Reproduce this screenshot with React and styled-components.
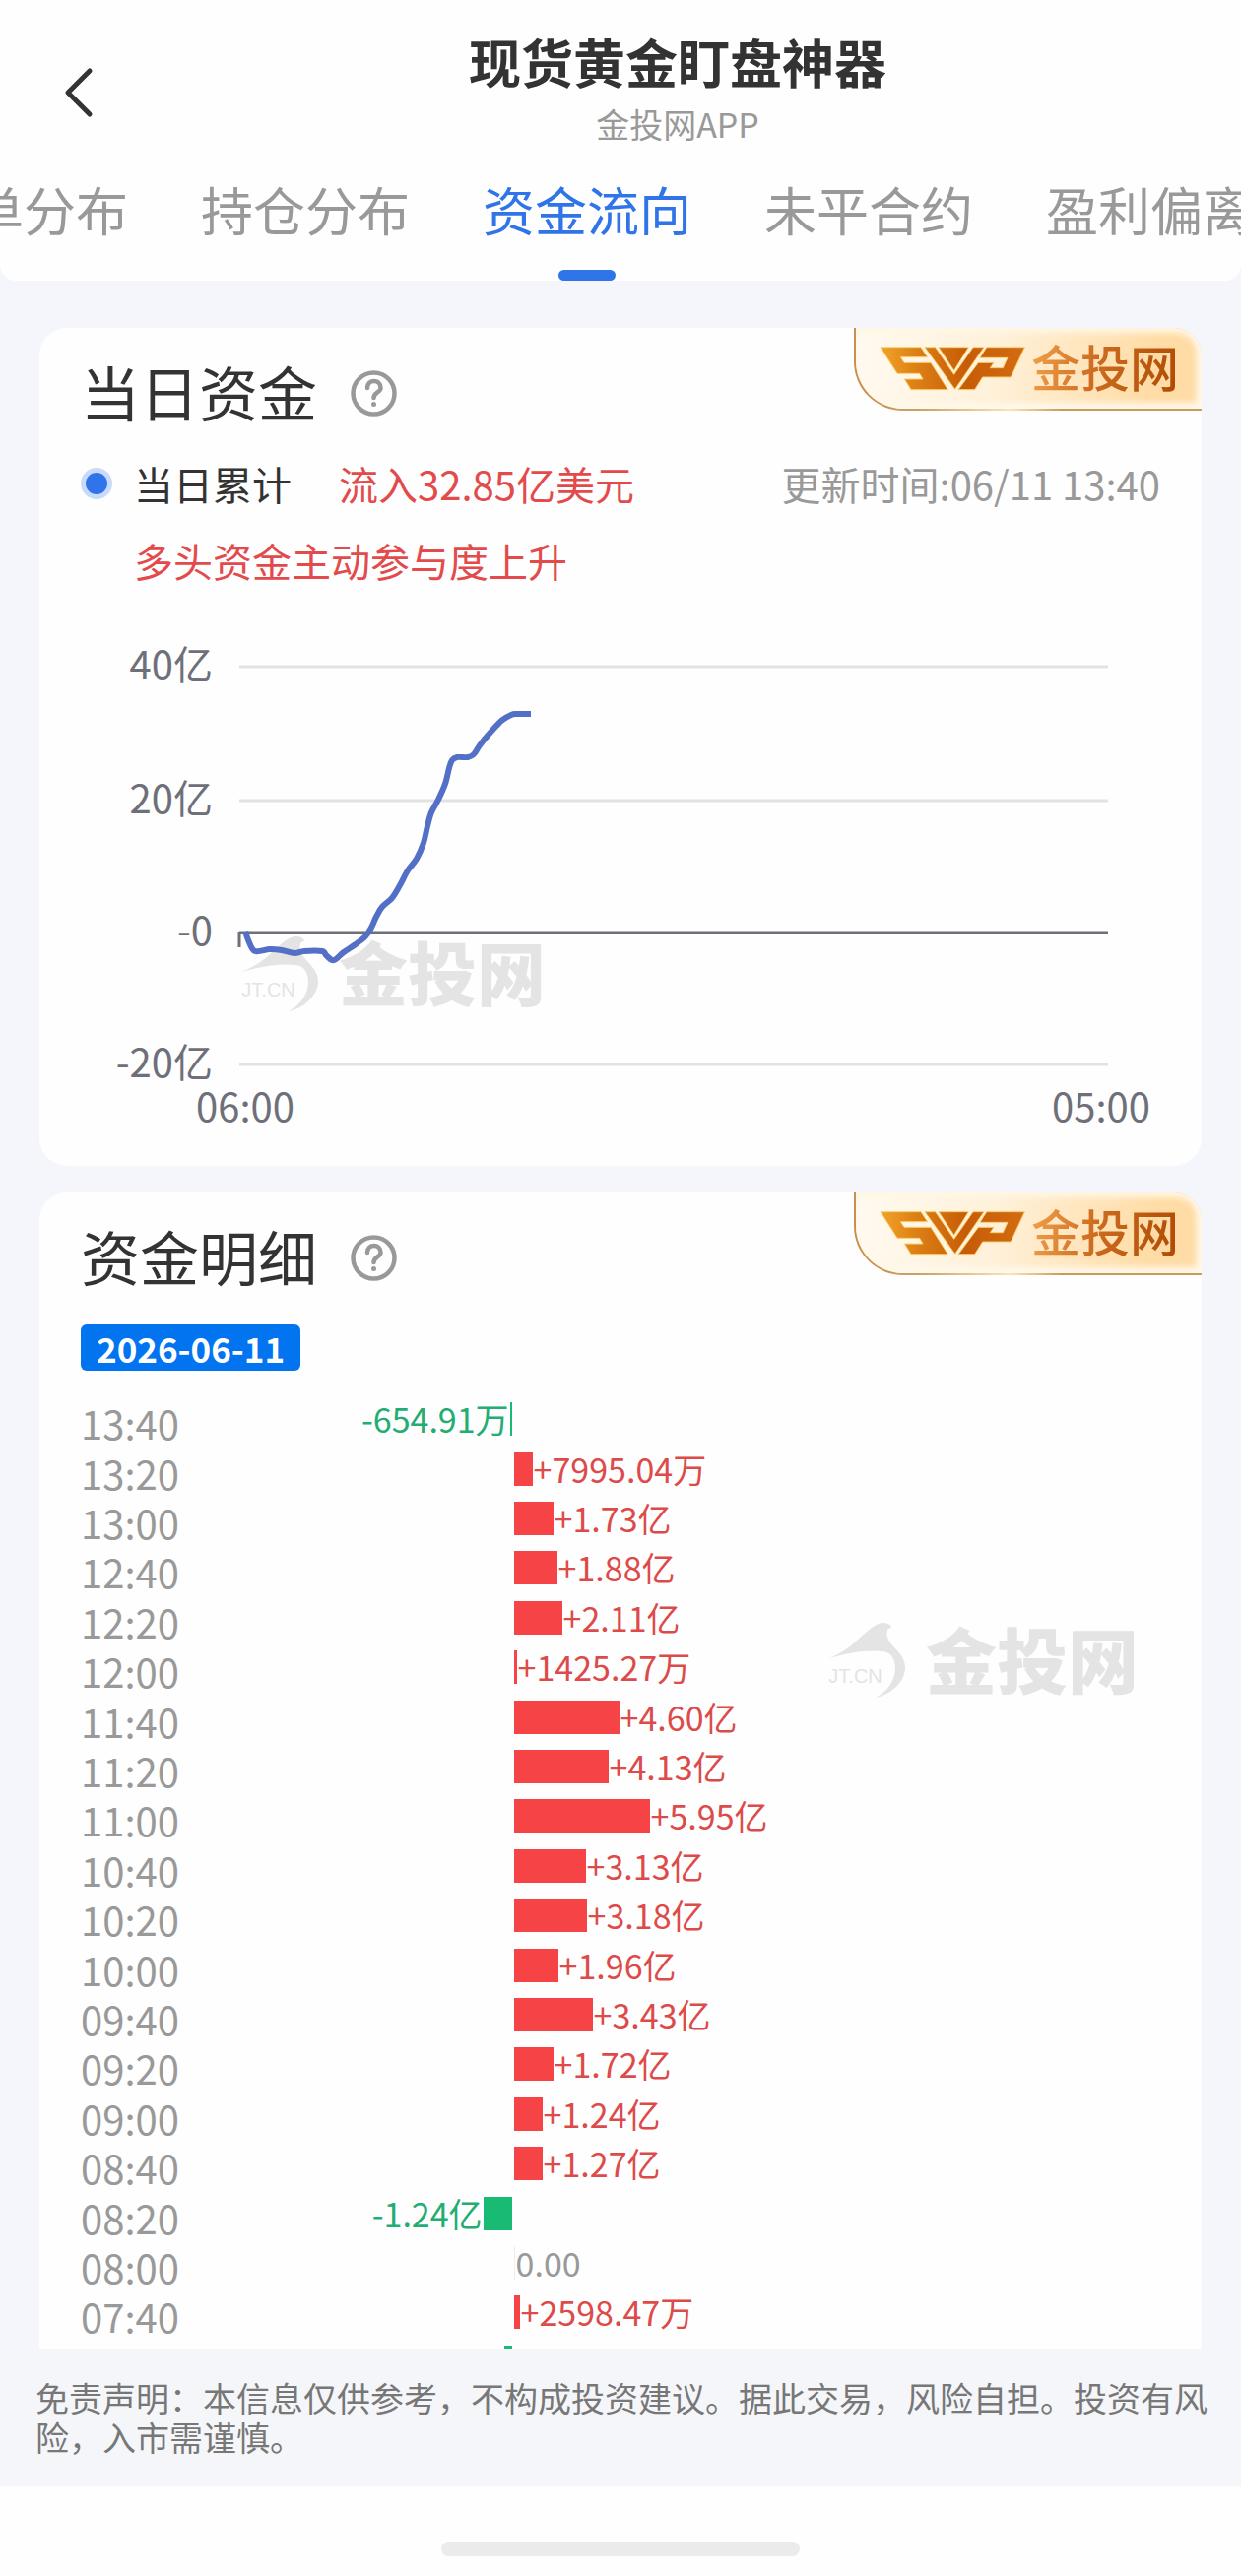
import React from "react";
import styled, { createGlobalStyle } from "styled-components";

const GlobalStyle = createGlobalStyle`
    * {
        box-sizing: border-box;
    }
    body {
        margin: 0;
        background: #fefefe;
        color: #333;
        font-family: "Noto Sans CJK SC", "Noto Sans", sans-serif;
    }
    button {
        padding: 0;
        border: 0;
        background: none;
        font: inherit;
        color: inherit;
        cursor: pointer;
    }
`;

const tabs = ["挂单分布", "持仓分布", "资金流向", "未平合约", "盈利偏离"];

// amounts in 亿
const flows = [
    { time: "13:40", amount: -0.065491, label: "-654.91万" },
    { time: "13:20", amount: 0.799504, label: "+7995.04万" },
    { time: "13:00", amount: 1.73, label: "+1.73亿" },
    { time: "12:40", amount: 1.88, label: "+1.88亿" },
    { time: "12:20", amount: 2.11, label: "+2.11亿" },
    { time: "12:00", amount: 0.142527, label: "+1425.27万" },
    { time: "11:40", amount: 4.6, label: "+4.60亿" },
    { time: "11:20", amount: 4.13, label: "+4.13亿" },
    { time: "11:00", amount: 5.95, label: "+5.95亿" },
    { time: "10:40", amount: 3.13, label: "+3.13亿" },
    { time: "10:20", amount: 3.18, label: "+3.18亿" },
    { time: "10:00", amount: 1.96, label: "+1.96亿" },
    { time: "09:40", amount: 3.43, label: "+3.43亿" },
    { time: "09:20", amount: 1.72, label: "+1.72亿" },
    { time: "09:00", amount: 1.24, label: "+1.24亿" },
    { time: "08:40", amount: 1.27, label: "+1.27亿" },
    { time: "08:20", amount: -1.24, label: "-1.24亿" },
    { time: "08:00", amount: 0, label: "0.00" },
    { time: "07:40", amount: 0.259847, label: "+2598.47万" },
    { time: "07:20", amount: -0.340218, label: "-3402.18万" },
];

const gridLines = [
    { y: 36, label: "40亿" },
    { y: 172, label: "20亿" },
    { y: 306, label: "-0", zero: true },
    { y: 440, label: "-20亿" },
];

const linePoints = [
    [167, 305], [171, 316], [177, 325], [192, 323], [204, 324], [217, 327],
    [227, 325], [245, 325], [249, 329], [255, 334], [259, 333], [267, 326],
    [279, 318], [289, 310], [295, 301], [300, 290], [306, 280], [316, 271],
    [324, 258], [332, 243], [341, 231], [348, 215], [352, 198], [356, 184],
    [363, 171], [370, 155], [374, 139], [377, 131], [382, 128], [393, 128],
    [399, 125], [405, 116], [413, 106], [427, 91], [437, 85], [443, 84], [457, 84],
];

const smoothPath = (points) =>
    points.slice(1).reduce((d, [x, y], i) => {
        const [x0, y0] = points[Math.max(i - 1, 0)];
        const [x1, y1] = points[i];
        const [x3, y3] = points[Math.min(i + 2, points.length - 1)];
        return `${d} C${x1 + (x - x0) / 6} ${y1 + (y - y0) / 6} ${x - (x3 - x1) / 6} ${y - (y3 - y1) / 6} ${x} ${y}`;
    }, `M${points[0].join(" ")}`);

const Page = styled.div`
    display: flex;
    flex-direction: column;
    height: 100vh;
    background: #f5f6fc;
`;

const Header = styled.header`
    flex: none;
    background: #fefefe;
    border-radius: 0 0 16px 16px;
`;

const TitleBar = styled.div`
    display: flex;
    align-items: flex-start;
    padding: 30px 0 36px;
`;

const BackButton = styled.button`
    display: flex;
    align-items: center;
    justify-content: flex-end;
    width: 116px;
    height: 128px;
    padding-right: 20px;
    margin-bottom: -12px;
`;

const TitleBlock = styled.div`
    flex: 1;
    text-align: center;
`;

const Title = styled.h1`
    margin: 0;
    font-size: 53px;
    line-height: 64px;
    font-weight: 700;
`;

const Subtitle = styled.div`
    margin-top: 12px;
    font-size: 34px;
    line-height: 40px;
    color: #999;
`;

const Tabs = styled.nav`
    display: flex;
    gap: 74px;
    overflow: hidden;
`;

const Tab = styled.button`
    flex: none;
    display: flex;
    flex-direction: column;
    align-items: center;
    justify-content: space-between;
    height: 103px;
    font-size: 53px;
    line-height: 60px;
    white-space: nowrap;
    color: ${({ $active }) => ($active ? "#2f74e8" : "#999")};

    &:first-child {
        margin-left: -82px;
    }
    &::after {
        content: "";
        width: 58px;
        height: 11px;
        border-radius: 6px;
        background: ${({ $active }) => ($active ? "#2f74e8" : "transparent")};
    }
`;

const Content = styled.main`
    flex: 1;
    min-height: 0;
    overflow-y: auto;
    scrollbar-width: none;
    padding: 48px 40px 0;
`;

const Card = styled.section`
    position: relative;
    margin-bottom: 27px;
    padding: 32px 42px 23px;
    border-radius: 28px;
    background: #fefefe;
`;

const CardHead = styled.div`
    display: flex;
    align-items: center;
    gap: 34px;
    height: 68px;
`;

const CardTitle = styled.h2`
    margin: 0;
    padding-bottom: 4px;
    font-size: 60px;
    line-height: 64px;
    font-weight: 400;
`;

const HelpButton = styled.button`
    display: flex;
`;

const Badge = styled.div`
    position: absolute;
    top: 0;
    right: 0;
    display: flex;
    align-items: center;
    gap: 2px;
    width: 353px;
    height: 84px;
    padding-left: 22px;
    border: solid transparent;
    border-width: 0 0 2px 2px;
    border-radius: 0 28px 0 50px;
    background:
        linear-gradient(100deg, #fffaf1 0%, #fff1da 40%, #ffdca5 85%) padding-box,
        linear-gradient(90deg, #c98f48 0%, #c9a568 20%, #f6e7b4 45%, #c79a55 60%, #c99a5c 100%) border-box;

    &::before {
        content: "";
        position: absolute;
        inset: 0;
        border-radius: 0 28px 0 48px;
        box-shadow: inset -5px -6px 6px #fff8ea, inset 0 5px 6px #fff6e4;
    }
`;

const BadgeText = styled.span`
    position: relative;
    padding-bottom: 6px;
    font-size: 50px;
    line-height: 56px;
    font-weight: 500;
    color: transparent;
    background: linear-gradient(100deg, #f0a24c 0%, #cc6a1e 45%, #ad4a04 100%);
    background-clip: text;
`;

const BadgeLogo = styled.svg`
    position: relative;
    flex: none;
`;

const Summary = styled.div`
    display: flex;
    align-items: center;
    margin-top: 28px;
    font-size: 40px;
    line-height: 60px;
`;

const Dot = styled.span`
    width: 32px;
    height: 32px;
    margin-right: 22px;
    border: 5px solid #c9dafa;
    border-radius: 50%;
    background: #2f74e8;
`;

const Inflow = styled.strong`
    margin-left: 48px;
    font-weight: 400;
    color: #e34a4c;
`;

const Updated = styled.time`
    margin-left: auto;
    color: #999;
`;

const Comment = styled.p`
    margin: 18px 0 0 54px;
    font-size: 40px;
    line-height: 60px;
    color: #e34a4c;
`;

const ChartBox = styled.div`
    position: relative;
    margin-top: 42px;
`;

const ChartSvg = styled.svg`
    position: relative;
    display: block;
    width: 100%;
    height: auto;
    font-size: 40px;
    fill: #6e7079;
`;

const WatermarkBox = styled.div`
    position: absolute;
    display: flex;
    align-items: center;
    gap: 20px;
    line-height: 72px;
    font-weight: 900;
    color: #e4e4e4;
    pointer-events: none;
`;

const ChartMark = styled(WatermarkBox)`
    top: 309px;
    left: 160px;
    font-size: 70px;
`;

const ListMark = styled(WatermarkBox)`
    top: 231px;
    right: 22px;
    font-size: 72px;
`;

const WatermarkText = styled.span`
    padding-bottom: 6px;
`;

const DateChip = styled.time`
    display: inline-block;
    margin-top: 34px;
    padding: 0 16px;
    border-radius: 6px;
    background: #0274ef;
    color: #fefefe;
    font-size: 35px;
    line-height: 47px;
    font-weight: 700;
`;

const FlowBox = styled.div`
    position: relative;
    margin-top: 24px;
`;

const FlowList = styled.ul`
    position: relative;
    display: grid;
    grid-template-rows: repeat(20, 1fr);
    height: 1008px;
    margin: 0;
    padding: 0;
    list-style: none;
`;

const FlowRow = styled.li`
    display: grid;
    grid-template-columns: minmax(0, 2fr) minmax(0, 3fr);
    gap: 2px;
`;

const FlowSide = styled.div`
    display: flex;
    align-items: center;
`;

const FlowTime = styled.time`
    margin-right: auto;
    padding-top: 8px;
    font-size: 40px;
    line-height: 36px;
    color: #999;
`;

const FlowBar = styled.span`
    height: 34px;
    background: ${({ $color }) => $color};
`;

const FlowLabel = styled.span`
    padding: 0 1px;
    font-size: 34px;
    line-height: 34px;
    color: ${({ $color }) => $color};
`;

const Disclaimer = styled.footer`
    flex: none;
    height: 140px;
    padding: 30px 34px 0 36px;
    background: #f5f6f9;
    font-size: 34px;
    line-height: 40px;
    color: #777;
`;

const HomeArea = styled.div`
    flex: none;
    display: flex;
    justify-content: center;
    height: 91px;
    padding-top: 56px;
    background: #fefefe;
`;

const HomeBar = styled.span`
    width: 364px;
    height: 15px;
    border-radius: 8px;
    background: #ebebeb;
`;

const SvpBadge = ({ id }) => (
    <Badge>
        <BadgeLogo width="154" height="48" viewBox="26 33 462 144" aria-hidden="true">
            <defs>
                <linearGradient id={id} x1="0" y1="0" x2="1" y2="0">
                    <stop offset="0" stopColor="#f2a32c" />
                    <stop offset="0.25" stopColor="#dc7f14" />
                    <stop offset="0.6" stopColor="#c75c08" />
                    <stop offset="1" stopColor="#d26c12" />
                </linearGradient>
            </defs>
            <path
                fill={`url(#${id})`}
                stroke="#fbcf6c"
                strokeWidth="3"
                strokeLinejoin="round"
                d="M35 41H158L178 71H96L107 88H188L240 170H128L108 138H164L154 121H86Z
                   M170 41H202L259 124L317 41H350L262 169Z
                   M212 41H303L259 112Z
                   M358 41H474L432 132H346L322 170H272L333 88H380L369 104H408L422 73H338Z"
            />
        </BadgeLogo>
        <BadgeText>金投网</BadgeText>
    </Badge>
);

const Watermark = ({ as: Box }) => (
    <Box aria-hidden="true">
        <svg width="82" height="78" viewBox="25 50 246 234">
            <path
                fill="#e4e4e4"
                d="M27 165C60 152 90 134 112 115C140 91 168 61 192 54C208 50 222 56 228 67C216 67 211 76 213 92C218 115 236 128 250 145C273 172 275 205 251 236C234 258 205 277 178 281C206 266 224 245 233 220C243 188 238 160 217 145C190 132 100 139 27 165Z"
            />
            <text x="35" y="235" fontSize="60" fontWeight="400" fontFamily="Liberation Sans, sans-serif" fill="#e4e4e4">
                JT.CN
            </text>
        </svg>
        <WatermarkText>金投网</WatermarkText>
    </Box>
);

const CardHeading = ({ children }) => (
    <CardHead>
        <CardTitle>{children}</CardTitle>
        <HelpButton type="button" aria-label="说明">
            <svg width="47" height="47" viewBox="0 0 94 94" fill="none" stroke="#999">
                <circle cx="47" cy="47" r="42" strokeWidth="9" />
                <path d="M34 36C34 17 61 17 61 36C61 45 47 45 47 56" strokeWidth="9" strokeLinecap="round" />
                <circle cx="47" cy="69" r="5" fill="#999" stroke="none" />
            </svg>
        </HelpButton>
    </CardHead>
);

const FlowChart = () => (
    <ChartBox>
        <Watermark as={ChartMark} />
        <ChartSvg viewBox="0 0 1096 520" role="img" aria-label="当日资金">
            {gridLines.map(({ y, label, zero }) => (
                <g key={label}>
                    <line x1="161" x2="1043" y1={y} y2={y} stroke={zero ? "#6e7079" : "#e2e2e2"} strokeWidth="3" />
                    <text x="134" y={y + 13} textAnchor="end">
                        {label}
                    </text>
                </g>
            ))}
            <path d="M161 305V321" stroke="#6e7079" strokeWidth="3" />
            <path d={smoothPath(linePoints)} fill="none" stroke="#5470c6" strokeWidth="6" strokeLinejoin="round" />
            <text x="167" y="498" textAnchor="middle">
                06:00
            </text>
            <text x="1036" y="498" textAnchor="middle">
                05:00
            </text>
        </ChartSvg>
    </ChartBox>
);

const Flow = ({ time, amount, label }) => {
    const width = Math.max(1, Math.round(Math.abs(amount) * 23.2));

    return (
        <FlowRow>
            <FlowSide>
                <FlowTime>{time}</FlowTime>
                {amount < 0 && (
                    <>
                        <FlowLabel $color="#22ad72">{label}</FlowLabel>
                        <FlowBar $color="#19bb74" style={{ width }} />
                    </>
                )}
            </FlowSide>
            <FlowSide>
                {amount >= 0 && (
                    <>
                        <FlowBar $color={amount ? "#f64346" : "#eee"} style={{ width }} />
                        <FlowLabel $color={amount ? "#dd4a4a" : "#999"}>{label}</FlowLabel>
                    </>
                )}
            </FlowSide>
        </FlowRow>
    );
};

const App = () => (
    <Page>
        <GlobalStyle />
        <Header>
            <TitleBar>
                <BackButton type="button" aria-label="返回">
                    <svg width="32" height="52" viewBox="0 0 32 52" fill="none" stroke="#333" strokeWidth="5" strokeLinecap="round" strokeLinejoin="round">
                        <path d="M27 4L5 26L27 48" />
                    </svg>
                </BackButton>
                <TitleBlock>
                    <Title>现货黄金盯盘神器</Title>
                    <Subtitle>金投网APP</Subtitle>
                </TitleBlock>
            </TitleBar>
            <Tabs>
                {tabs.map((tab) => (
                    <Tab key={tab} type="button" $active={tab === "资金流向"}>
                        {tab}
                    </Tab>
                ))}
            </Tabs>
        </Header>

        <Content>
            <Card>
                <SvpBadge id="svp-day" />
                <CardHeading>当日资金</CardHeading>
                <Summary>
                    <Dot />
                    当日累计
                    <Inflow>流入32.85亿美元</Inflow>
                    <Updated>更新时间:06/11 13:40</Updated>
                </Summary>
                <Comment>多头资金主动参与度上升</Comment>
                <FlowChart />
            </Card>

            <Card>
                <SvpBadge id="svp-detail" />
                <CardHeading>资金明细</CardHeading>
                <DateChip>2026-06-11</DateChip>
                <FlowBox>
                    <Watermark as={ListMark} />
                    <FlowList>
                        {flows.map((flow) => (
                            <Flow key={flow.time} {...flow} />
                        ))}
                    </FlowList>
                </FlowBox>
            </Card>
        </Content>

        <Disclaimer>
            免责声明：本信息仅供参考，不构成投资建议。据此交易，风险自担。投资有风险，入市需谨慎。
        </Disclaimer>
        <HomeArea>
            <HomeBar />
        </HomeArea>
    </Page>
);

export default App;
